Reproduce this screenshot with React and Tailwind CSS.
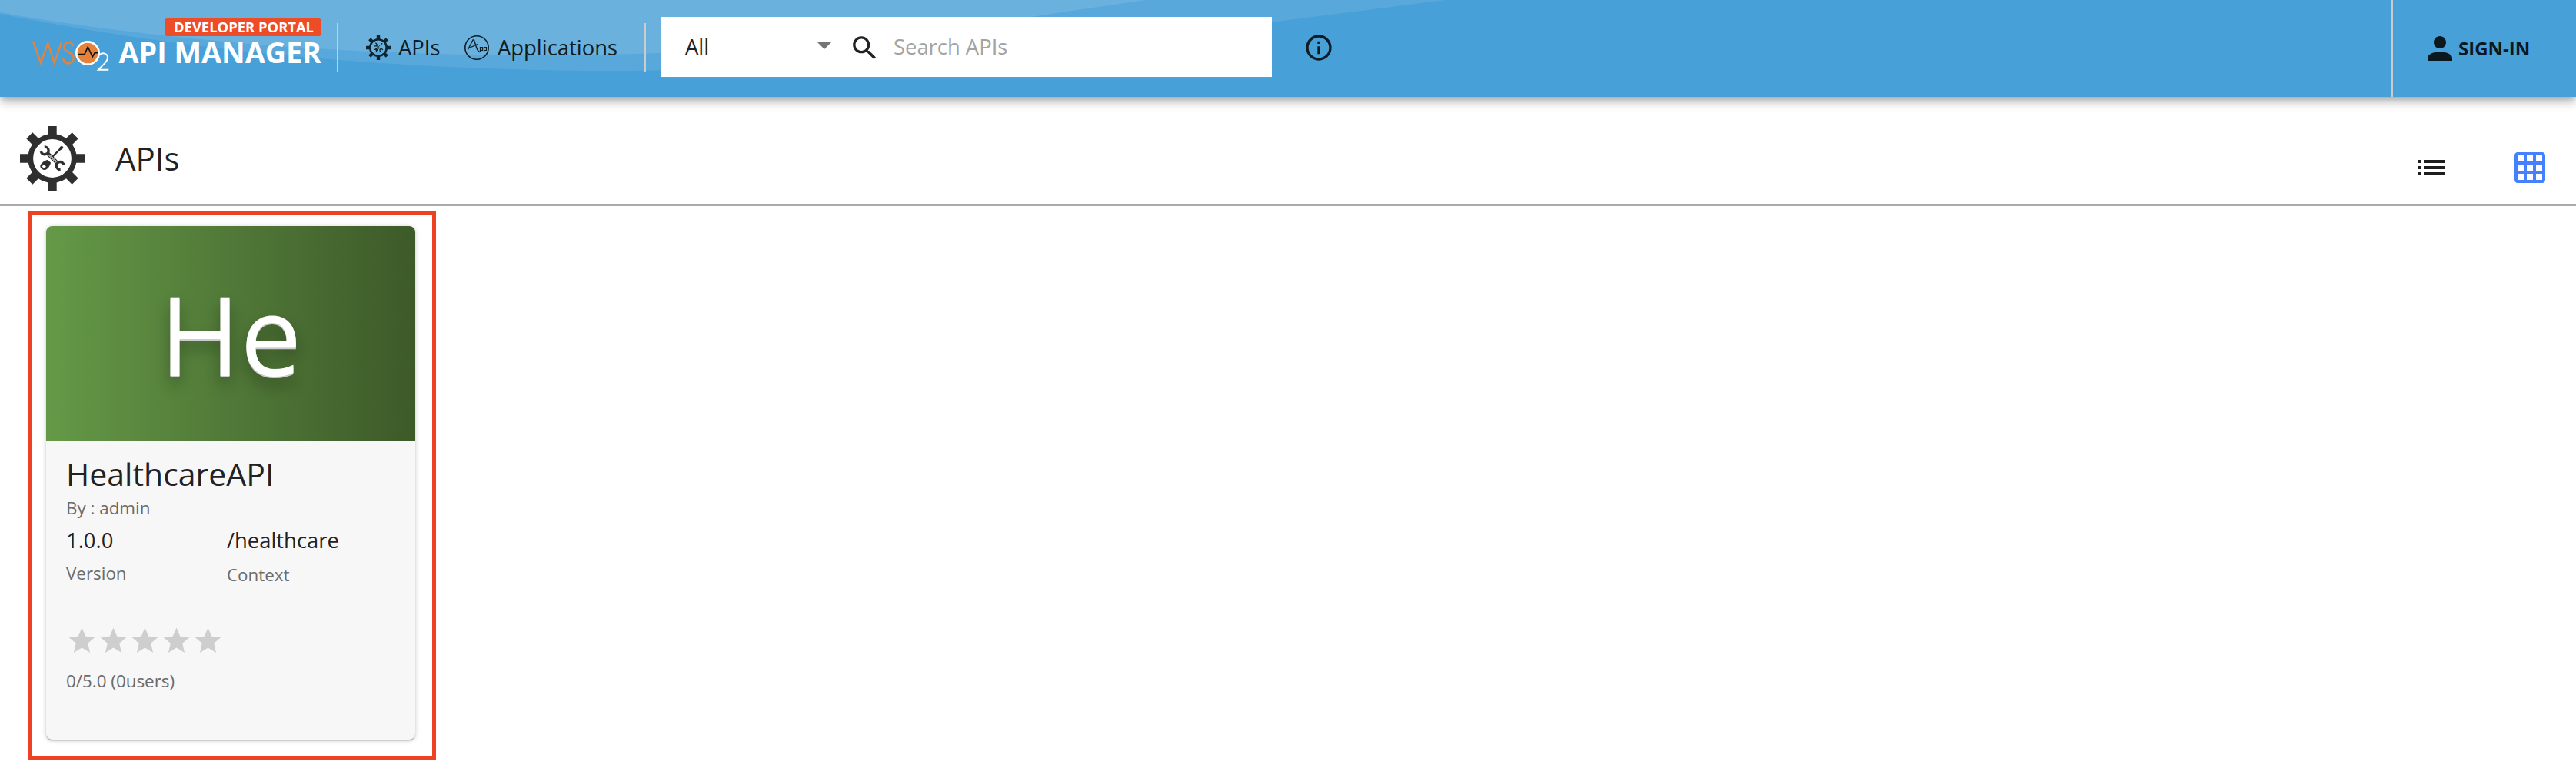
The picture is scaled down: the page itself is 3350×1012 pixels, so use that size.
import React from "react";

function Gear({ className, fill }) {
  return (
    <svg viewBox="0 0 84 84" className={className} fill={fill}>
      {[0, 45, 90, 135].map((a) => (
        <path key={a} transform={`rotate(${a} 42 42)`} d="M36.300 0h11.400v16h-11.400zM36.300 68h11.400v16h-11.400z" />
      ))}
      <circle cx="42" cy="42" r="28.300" fill="none" stroke={fill} strokeWidth="6.800" />
      <path d="M41 41L52.500 29.500" stroke={fill} strokeWidth="2.400" />
      <path d="M50.800 30l1.200-3 2.600-1.500 1.800 1.900-1.400 2.600-2.700 1.500z" />
      <path d="M36 44l4 3.600c-.5 3.200-3 7.500-6.500 9.200-3 1.200-8-2-7-5.500 1.200-3.300 5.500-6.800 9.500-7.300z" />
      <path d="M31 50l3 2.600-2.500 2.600-3-2.600z" fill="white" />
      <path d="M27.300 33A5 5 0 1 0 31.800 26.800M57.100 50.300A5 5 0 1 0 52.600 56.500" fill="none" stroke={fill} strokeWidth="3.300" />
      <path d="M35 34.500L49.500 49" stroke={fill} strokeWidth="4.800" />
      <path d="M38 37.500L47.500 47" stroke="white" strokeWidth="2.400" />
      <path d="M37.500 37L48 47.500" stroke={fill} strokeWidth="1" />
    </svg>
  );
}

function AppIcon() {
  return (
    <svg viewBox="0 0 32 32" className="h-8 w-8" fill="none" stroke="#0e1c24">
      <circle cx="16" cy="16" r="15.200" strokeWidth="1.600" />
      <path d="M4.500 18.500L11 6h1.500l3 9.500c.8 2.500 2 5 4.500 6.500M5 17l12-5.500" strokeWidth="1.300" />
      <path d="M20.500 21v-5.500h3v4h-3M25.500 21v-5.500h3v4h-3" strokeWidth="1.200" />
    </svg>
  );
}

function Logo() {
  return (
    <svg viewBox="0 0 104 44" className="h-11 w-[104px] shrink-0" fill="none">
      <path d="M2.500 3.500L12 31L21.300 5L29.700 31L39 4" stroke="#e5823c" strokeWidth="2.400" strokeMiterlimit="8" />
      <path d="M54.500 9c-1-3.500-3.500-4.800-6.300-4.600-6.400.4-8 8.200-2.400 11 3.900 2 9 3.400 9 8.800 0 4.500-3 7.300-6.800 7.300-3.800 0-6.300-2.500-6.800-6.500" stroke="#e5823c" strokeWidth="2.400" />
      <circle cx="73" cy="18" r="14.700" fill="#e5823c" stroke="#fff" strokeWidth="2.700" />
      <path d="M60.300 19.700H69L73.300 10L79.300 23L82.300 17.700H86.300" stroke="#111" strokeWidth="1.700" />
      <path d="M89 20c3-3 10-2 10 4 0 4-3.500 7-12 15.700h13.300" stroke="#fff" strokeWidth="2" />
    </svg>
  );
}

const Icon = ({ d, className, fill }) => (
  <svg viewBox="0 0 24 24" className={className} fill={fill}><path d={d} /></svg>
);

const PERSON = "M12 12c2.210 0 4-1.790 4-4s-1.790-4-4-4-4 1.790-4 4 1.790 4 4 4zm0 2c-2.670 0-8 1.340-8 4v2h16v-2c0-2.660-5.330-4-8-4z";
const SEARCH = "M15.500 14h-.79l-.28-.27C15.410 12.590 16 11.110 16 9.500 16 5.910 13.090 3 9.500 3S3 5.910 3 9.500 5.910 16 9.500 16c1.610 0 3.090-.59 4.230-1.570l.27.28v.79l5 4.990L20.490 19l-4.990-5zm-6 0C7.010 14 5 11.990 5 9.500S7.010 5 9.500 5 14 7.010 14 9.500 11.990 14 9.500 14z";
const INFO = "M11 17h2v-6h-2v6zm1-15C6.480 2 2 6.480 2 12s4.480 10 10 10 10-4.480 10-10S17.520 2 12 2zm0 18c-4.410 0-8-3.590-8-8s3.590-8 8-8 8 3.590 8 8-3.590 8-8 8zM11 9h2V7h-2v2z";
const LIST = "M3 13h2v-2H3v2zm0 4h2v-2H3v2zm0-8h2V7H3v2zm4 4h14v-2H7v2zm0 4h14v-2H7v2zM7 7v2h14V7H7z";
const GRID = "M20 2H4c-1.100 0-2 .9-2 2v16c0 1.100.9 2 2 2h16c1.100 0 2-.9 2-2V4c0-1.100-.9-2-2-2zM8 20H4v-4h4v4zm0-6H4v-4h4v4zm0-6H4V4h4v4zm6 12h-4v-4h4v4zm0-6h-4v-4h4v4zm0-6h-4V4h4v4zm6 12h-4v-4h4v4zm0-6h-4v-4h4v4zm0-6h-4V4h4v4z";
const STAR = "M12 17.270L18.180 21l-1.640-7.030L22 9.240l-7.190-.61L12 2 9.190 8.630 2 9.240l5.460 4.730L5.820 21z";

function Header() {
  return (
    <header className="relative flex h-[126px] items-start bg-[#47a0d7] shadow-[0_4px_8px_-2px_rgba(0,0,0,0.2),0_8px_10px_rgba(0,0,0,0.14),0_2px_20px_rgba(0,0,0,0.12)]">
      <svg viewBox="0 0 1900 126" className="absolute left-0 top-0 h-[126px] w-[1900px]">
        <path d="M0 18C250 68 520 91 780 92C1080 92 1350 70 1660 28L1880 0H0z" fill="#59a8db" />
        <path d="M0 16C200 52 450 72 700 72C960 72 1180 48 1400 13L1490 0H0z" fill="#6ab1de" />
      </svg>
      <div className="relative flex w-full items-start">
        <div className="flex w-[438px] pl-[41px] pt-6">
          <div className="pt-[27px]"><Logo /></div>
          <div className="flex w-[273px] flex-col items-end">
            <div className="flex h-[23px] w-[204px] items-center justify-center rounded bg-[#ee4b27] pl-0.5 text-[18.400px] font-bold leading-none whitespace-nowrap text-white">DEVELOPER PORTAL</div>
            <div className="mt-px h-10 text-[37.700px] font-bold leading-10 whitespace-nowrap text-white">API MANAGER</div>
          </div>
        </div>
        <div className="mt-[30px] h-16 w-0.5 bg-[#ccc]" />
        <nav className="mt-[46px] flex h-8 w-[398px] items-center pl-9 text-[27.400px] text-[#0e1c24]">
          <Gear className="h-8 w-8" fill="#10242e" />
          <span className="ml-[10px] w-[86px]">APIs</span>
          <AppIcon />
          <span className="ml-[11px]">Applications</span>
        </nav>
        <div className="mt-[30px] h-16 w-0.5 bg-[#ccc]" />
        <div className="mt-[22px] ml-5 flex h-20 w-[794px] items-center border-b-2 border-[#929292] bg-white text-[27.400px] text-[#222]">
          <div className="flex h-full w-[233px] items-center justify-between border-r border-[#929292] pr-[11px] pl-[31px]">
            <span>All</span>
            <svg viewBox="0 0 18 9" className="mb-1 h-[9px] w-[18px]" fill="#757575"><path d="M0 0h18l-9 9z" /></svg>
          </div>
          <Icon d={SEARCH} className="mt-0.5 ml-[11px] h-[41px] w-[41px]" fill="#222" />
          <span className="ml-[17px] text-[#a3a3a3]">Search APIs</span>
        </div>
        <Icon d={INFO} className="ml-[41px] mt-[42px] h-10 w-10" fill="#0e1c24" />
        <div className="ml-auto flex h-[126px] w-[240px] items-center border-l-2 border-[#ccc] pl-[37px]">
          <Icon d={PERSON} className="h-12 w-12" fill="#0c181f" />
          <span className="text-[24px] font-bold text-[#0c181f]">SIGN-IN</span>
        </div>
      </div>
    </header>
  );
}

export default function App() {
  return (
    <div className="h-[1012px] w-[3350px] overflow-hidden bg-white font-['Open_Sans',sans-serif] text-[#222]">
      <Header />
      <div className="flex h-[142px] items-start border-b-2 border-[#aaa] pl-[26px]">
        <Gear className="mt-[38px] h-[84px] w-[84px]" fill="#2f2f2f" />
        <h1 className="ml-10 mt-[50px] text-[42px] leading-[60px]">APIs</h1>
        <div className="ml-auto mt-[68px] mr-9 flex gap-20">
          <Icon d={LIST} className="h-12 w-12" fill="#1e1e1e" />
          <Icon d={GRID} className="h-12 w-12" fill="#4580ff" />
        </div>
      </div>
      <div className="mt-[7px] ml-[36px] h-[713px] w-[531px] border-[5px] border-[#ee4023] pt-[14px] pl-[19px]">
        <article className="h-[668px] w-[480px] overflow-hidden rounded-lg bg-[#f7f7f7] shadow-[0_2px_2px_-1px_rgba(0,0,0,0.4),0_1px_6px_rgba(0,0,0,0.2)]">
          <div className="flex h-[280px] items-center justify-center bg-linear-to-r from-[#659947] to-[#3d5a29] text-[142px] leading-none text-white [text-shadow:0_2px_0_#ccc,0_12px_20px_rgba(0,0,0,0.3)]">
            <span>He</span>
          </div>
          <div className="pl-[26px]">
            <h2 className="pt-3.5 text-[41px] leading-[56px]">HealthcareAPI</h2>
            <p className="text-[22.400px] leading-[34px] text-[#6b6b6b]">By : admin</p>
            <div className="flex">
              <div className="w-[209px]">
                <p className="text-[27.400px] leading-[50px]">1.0.0</p>
                <p className="text-[22.400px] leading-9 text-[#6b6b6b]">Version</p>
              </div>
              <div>
                <p className="text-[27.400px] leading-[50px]">/healthcare</p>
                <p className="pt-0.5 text-[22.400px] leading-9 text-[#6b6b6b]">Context</p>
              </div>
            </div>
            <div className="mt-[47px] flex">
              {[0, 1, 2, 3, 4].map((i) => <Icon key={i} d={STAR} className="h-[41px] w-[41px]" fill="#cecece" />)}
            </div>
            <p className="mt-3.5 text-[22.400px] leading-9 text-[#6b6b6b]">0/5.0 (0users)</p>
          </div>
        </article>
      </div>
    </div>
  );
}
